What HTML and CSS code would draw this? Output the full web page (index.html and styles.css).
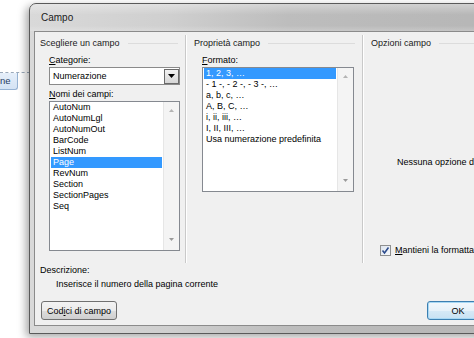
FILE: index.html
```html
<!DOCTYPE html>
<html lang="it">
<head>
<meta charset="utf-8">
<title>Campo</title>
<link rel="stylesheet" href="styles.css">
</head>
<body>
<div class="desk">
  <div class="tab-line"></div>
  <div class="tab">ne</div>
  <div class="window">
    <div class="titlebar">Campo</div>
    <div class="client">
      <div class="panels">
        <section class="panel p1">
          <div class="group-title"><span>Scegliere un campo</span></div>
          <div class="inner">
            <div class="label lbl-first"><u>C</u>ategorie:</div>
            <div class="combo">
              <span class="combo-text">Numerazione</span>
              <span class="drop"><svg width="7" height="4" viewBox="0 0 7 4"><path d="M0 0H7L3.5 4Z" fill="#000"/></svg></span>
            </div>
            <div class="label lbl-second"><u>N</u>omi dei campi:</div>
            <div class="listbox names">
              <ul class="items">
                <li>AutoNum</li>
                <li>AutoNumLgl</li>
                <li>AutoNumOut</li>
                <li>BarCode</li>
                <li>ListNum</li>
                <li class="sel">Page</li>
                <li>RevNum</li>
                <li>Section</li>
                <li>SectionPages</li>
                <li>Seq</li>
              </ul>
              <div class="scroll">
                <svg width="5" height="3" viewBox="0 0 5 3"><path d="M0 3H5L2.5 0Z" fill="#b4b4b4"/></svg>
                <svg width="5" height="3" viewBox="0 0 5 3"><path d="M0 0H5L2.5 3Z" fill="#9a9a9a"/></svg>
              </div>
            </div>
          </div>
        </section>
        <section class="panel p2">
          <div class="group-title"><span>Proprietà campo</span></div>
          <div class="inner">
            <div class="label lbl-first"><u>F</u>ormato:</div>
            <div class="listbox formats">
              <ul class="items">
                <li class="sel">1, 2, 3, …</li>
                <li>- 1 -, - 2 -, - 3 -, …</li>
                <li>a, b, c, …</li>
                <li>A, B, C, …</li>
                <li>i, ii, iii, …</li>
                <li>I, II, III, …</li>
                <li>Usa numerazione predefinita</li>
              </ul>
              <div class="scroll">
                <svg width="5" height="3" viewBox="0 0 5 3"><path d="M0 3H5L2.5 0Z" fill="#b4b4b4"/></svg>
                <svg width="5" height="3" viewBox="0 0 5 3"><path d="M0 0H5L2.5 3Z" fill="#9a9a9a"/></svg>
              </div>
            </div>
          </div>
        </section>
        <section class="panel p3">
          <div class="group-title"><span>Opzioni campo</span></div>
          <div class="options">
            <div class="no-options">Nessuna opzione disponibile per questo campo</div>
            <label class="check-row">
              <span class="checkbox"><svg width="9" height="9" viewBox="0 0 9 9"><path d="M1.5 4.5L3.5 7L7.5 1.5" fill="none" stroke="#2c4b8c" stroke-width="1.6"/></svg></span>
              <span><u>M</u>antieni la formattazione durante gli aggiornamenti</span>
            </label>
          </div>
        </section>
      </div>
      <div class="desc">
        <div class="desc-label">Descrizione:</div>
        <div class="desc-text">Inserisce il numero della pagina corrente</div>
      </div>
      <div class="buttons">
        <button class="btn">Cod<u>i</u>ci di campo</button>
        <button class="btn ok">OK</button>
      </div>
    </div>
  </div>
</div>
</body>
</html>
```

FILE: styles.css
```css
* { box-sizing: border-box; }
html, body { margin: 0; padding: 0; }
body {
  width: 474px;
  height: 338px;
  overflow: hidden;
  background: #ffffff;
  font-family: "Liberation Sans", Arial, sans-serif;
  font-size: 9px;
  color: #000;
}
.desk { position: relative; width: 474px; height: 338px; overflow: hidden; }

.tab-line {
  position: absolute;
  left: 0; top: 72px;
  width: 30px;
  border-top: 1px dashed #9aa9ba;
}
.tab {
  position: absolute;
  left: -14px; top: 73px;
  width: 32px; height: 17px;
  background: linear-gradient(#e6effa, #d4e3f4);
  border: 1px solid #97b3d3;
  border-top: none;
  border-radius: 0 0 3px 3px;
  color: #1f3d63;
  padding-left: 13px;
  line-height: 16px;
  font-size: 9.5px;
}

.window {
  position: absolute;
  left: 29px; top: 3px;
  width: 470px; height: 331px;
  border: 1px solid #5a5a5a;
  border-radius: 7px 7px 0 0;
  background: linear-gradient(90deg, #d9d9d9 0%, #cfcfcf 30%, #bdbdbd 55%, #b6b6b6 100%);
  box-shadow: -3px 3px 9px rgba(0,0,0,0.35);
  display: flex;
  flex-direction: column;
  padding: 0 0 7px 4px;
}
.titlebar {
  height: 27px;
  line-height: 27px;
  font-size: 10px;
  color: #1b1b1b;
  background: linear-gradient(rgba(255,255,255,0.35), rgba(255,255,255,0) 40%, rgba(255,255,255,0) 80%, rgba(255,255,255,0.2));
  margin-left: -4px;
  padding-left: 11px;
  border-radius: 6px 6px 0 0;
}
.client {
  flex: 1;
  background: #f0f0f0;
  border: 1px solid #8b8b8b;
  display: flex;
  flex-direction: column;
  min-width: 0;
}

.panels {
  display: flex;
  margin-top: 3px;
  height: 228px;
}
.panel {
  height: 228px;
  padding-top: 2px;
  flex-shrink: 0;
}
.p1 { width: 151px; border-right: 1px solid #c9c9c9; padding-left: 5px; }
.p2 { width: 177px; border-left: 1px solid #ffffff; border-right: 1px solid #c9c9c9; padding-left: 7px; }
.p3 { flex: 1 1 auto; min-width: 0; overflow: hidden; border-left: 1px solid #ffffff; padding-left: 7px; }

.group-title {
  display: flex;
  align-items: center;
  height: 12px;
  line-height: 12px;
  padding-right: 7px;
  color: #1a1a1a;
}
.group-title::after {
  content: "";
  flex: 1;
  height: 1px;
  background: #dcdcdc;
  margin-left: 8px;
}
.inner { margin-left: 9px; }
.p2 .inner { margin-left: 8px; }

.label { height: 12px; line-height: 12px; }
.lbl-first { margin-top: 5px; }
.lbl-second { margin-top: 3px; }

.combo {
  margin-top: 1px;
  width: 131px;
  height: 18px;
  background: #fff;
  border: 1px solid #8a8a8a;
  display: flex;
  align-items: center;
  justify-content: space-between;
}
.combo-text { padding-left: 3px; }
.drop {
  width: 15px; height: 15px;
  border: 1px solid #6a6a6a;
  background: linear-gradient(#f2f2f2, #d6d6d6);
  display: flex; align-items: center; justify-content: center;
}

.listbox {
  margin-top: 1px;
  background: #fff;
  border: 1px solid #858990;
  display: flex;
}
.names { width: 131px; height: 150px; }
.formats { width: 152px; height: 125px; }
.items {
  list-style: none;
  margin: 0;
  padding: 0 1px;
  flex: 1;
}
.items li {
  height: 11px;
  line-height: 11px;
  padding-left: 2px;
  white-space: nowrap;
}
.items li.sel { background: #3399ff; color: #fff; }
.scroll {
  width: 16px;
  background: #f4f4f4;
  border-left: 1px solid #e6e6e6;
  display: flex;
  flex-direction: column;
  justify-content: space-between;
  align-items: center;
  padding: 7px 0 9px;
}

.options {
  display: flex;
  flex-direction: column;
}
.no-options {
  margin-top: 107px;
  margin-left: 26px;
  height: 12px;
  line-height: 12px;
  white-space: nowrap;
}
.check-row {
  margin-top: 76px;
  margin-left: 9px;
  display: flex;
  align-items: center;
  gap: 4px;
  white-space: nowrap;
  height: 12px;
}
.checkbox {
  flex-shrink: 0;
  width: 11px; height: 11px;
  border: 1px solid #8e8f8f;
  background: linear-gradient(135deg, #dde4ee, #f6f8fb);
  display: flex; align-items: center; justify-content: center;
}

.desc { padding-left: 5px; }
.desc-label { height: 14px; line-height: 14px; }
.desc-text { height: 14px; line-height: 14px; padding-left: 16px; }

.buttons {
  display: flex;
  align-items: flex-start;
  margin-top: 10px;
  padding-left: 6px;
}
.btn {
  flex-shrink: 0;
  font-family: "Liberation Sans", Arial, sans-serif;
  font-size: 9px;
  color: #000;
  height: 19px;
  width: 76px;
  padding: 0;
  border: 1px solid #707070;
  border-radius: 3px;
  background: linear-gradient(#f3f3f3 0%, #ebebeb 50%, #dddddd 51%, #cfcfcf 100%);
}
.ok {
  margin-left: 310px;
  width: 62px;
  border-color: #3c7fb1;
  box-shadow: inset 0 0 0 1px #a8d8f4;
  background: linear-gradient(#f2f8fc 0%, #e6f1f9 50%, #d6e9f6 51%, #c8e1f3 100%);
}
```
